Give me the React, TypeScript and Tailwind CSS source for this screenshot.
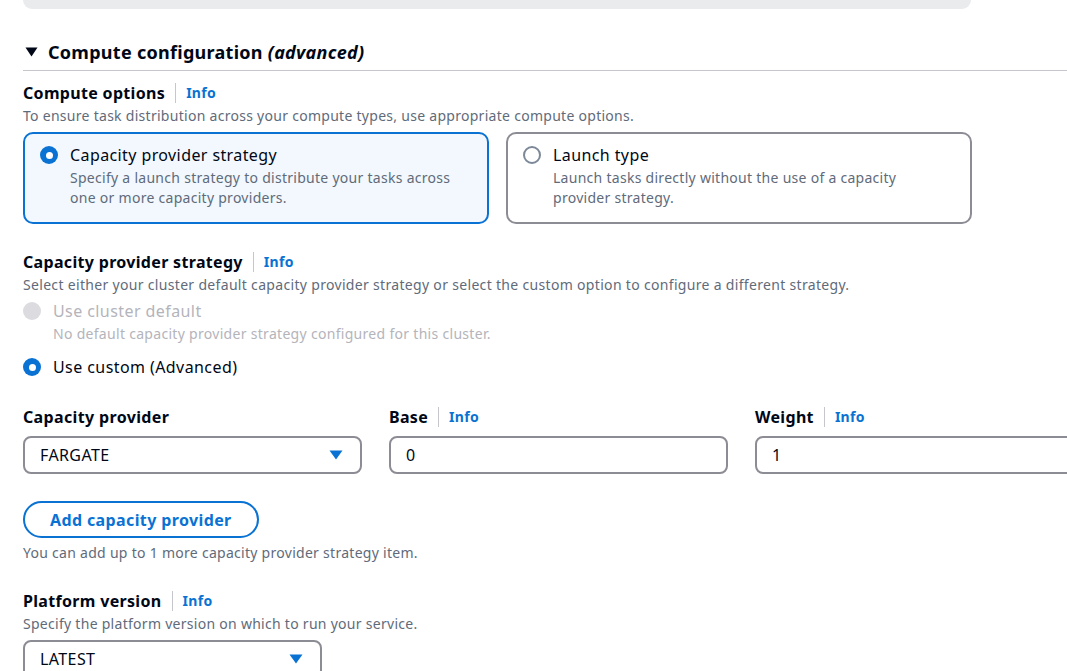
import React from "react";

function InfoLabel({ label, className = "" }: { label: string; className?: string }) {
  return (
    <div className={`flex items-center h-[22px] ${className}`}>
      <span className="text-[16px] font-bold leading-[22px] tracking-[0.32px] text-[#000716]">{label}</span>
      <span className="mx-[10px] h-[20px] w-px bg-[#c6c6cd]" />
      <a className="text-[14px] font-bold leading-[20px] tracking-[0.3px] text-[#0972d3]">Info</a>
    </div>
  );
}

function Radio({ checked, disabled }: { checked?: boolean; disabled?: boolean }) {
  if (disabled) {
    return <span className="block h-[18px] w-[18px] shrink-0 rounded-full bg-[#dcdce0]" />;
  }
  if (checked) {
    return (
      <span className="flex h-[18px] w-[18px] shrink-0 items-center justify-center rounded-full bg-[#0972d3]">
        <span className="block h-[7px] w-[7px] rounded-full bg-white" />
      </span>
    );
  }
  return <span className="block h-[18px] w-[18px] shrink-0 rounded-full border-2 border-[#7d8998] bg-white" />;
}

function Caret() {
  return (
    <svg width="14" height="10" viewBox="0 0 14 10" className="shrink-0">
      <path d="M0.5 0.5 H13.5 L7 9.5 Z" fill="#0972d3" />
    </svg>
  );
}

function Tile({ title, desc, checked }: { title: string; desc: React.ReactNode; checked?: boolean }) {
  return (
    <div
      className={`flex w-[466px] gap-[12px] rounded-[10px] border-2 pl-[15px] pr-4 pt-[10px] pb-[14px] ${
        checked ? "border-[#0972d3] bg-[#f2f8fd]" : "border-[#8c8c94] bg-white"
      }`}
    >
      <div className="pt-[2px]">
        <Radio checked={checked} />
      </div>
      <div>
        <div className="text-[16px] leading-[22px] tracking-[0.4px] text-[#000716]">{title}</div>
        <div className="mt-[2px] text-[14px] leading-[20px] tracking-[0.28px] text-[#5f6b7a]">{desc}</div>
      </div>
    </div>
  );
}

export default function App() {
  return (
    <div
      className="h-[671px] w-[1067px] overflow-hidden bg-white text-[#000716] tracking-[0.28px]"
      style={{ fontFamily: '"Noto Sans", "Open Sans", Arial, sans-serif' }}
    >
      <div className="ml-[23px] h-[9px] w-[948px] rounded-b-[12px] bg-[#e9ebed]" />

      <div className="ml-[23px] mt-[31px] border-b border-[#c6c6cd] pb-[6px]">
        <div className="flex items-center gap-[10px] pl-[2px]">
          <svg width="13" height="10" viewBox="0 0 13 10">
            <path d="M0.5 0.5 H12.5 L6.5 9.5 Z" fill="#000716" />
          </svg>
          <h2 className="text-[18px] font-bold leading-[24px] tracking-[0.28px]">
            Compute configuration <i className="font-bold">(advanced)</i>
          </h2>
        </div>
      </div>

      <div className="pl-[23px]">
        <InfoLabel label="Compute options" className="mt-[11px]" />
        <p className="mt-[2px] text-[14px] leading-[20px] text-[#5f6b7a]">
          To ensure task distribution across your compute types, use appropriate compute options.
        </p>
        <div className="mt-[6px] flex gap-[17px]">
          <Tile
            checked
            title="Capacity provider strategy"
            desc={
              <>
                Specify a launch strategy to distribute your tasks across
                <br />
                one or more capacity providers.
              </>
            }
          />
          <Tile
            title="Launch type"
            desc={
              <>
                Launch tasks directly without the use of a capacity
                <br />
                provider strategy.
              </>
            }
          />
        </div>

        <InfoLabel label="Capacity provider strategy" className="mt-[27px]" />
        <p className="mt-[2px] text-[14px] leading-[20px] tracking-[0.32px] text-[#5f6b7a]">
          Select either your cluster default capacity provider strategy or select the custom option to configure a different strategy.
        </p>

        <div className="mt-[5px] flex gap-[12px]">
          <div className="pt-[2px]">
            <Radio disabled />
          </div>
          <div>
            <div className="text-[16px] leading-[22px] tracking-[0.42px] text-[#b4b4bb]">Use cluster default</div>
            <div className="mt-[2px] text-[14px] leading-[20px] tracking-[0.3px] text-[#b4b4bb]">
              No default capacity provider strategy configured for this cluster.
            </div>
          </div>
        </div>
        <div className="mt-[12px] flex items-center gap-[12px]">
          <Radio checked />
          <div className="text-[16px] leading-[22px] tracking-[0.42px]">Use custom (Advanced)</div>
        </div>

        <div className="mt-[28px] flex w-[1071px] gap-[27px]">
          <div className="w-[339px]">
            <div className="h-[22px] text-[16px] font-bold leading-[22px] tracking-[0.35px]">Capacity provider</div>
            <div className="mt-[8px] flex h-[38px] items-center justify-between rounded-[8px] border-2 border-[#8c8c94] pl-[15px] pr-[17px] text-[16px] tracking-[0.4px]">
              <span>FARGATE</span>
              <Caret />
            </div>
          </div>
          <div className="w-[339px]">
            <InfoLabel label="Base" />
            <div className="mt-[8px] flex h-[38px] items-center rounded-[8px] border-2 border-[#8c8c94] pl-[15px] text-[16px]">
              0
            </div>
          </div>
          <div className="w-[339px]">
            <InfoLabel label="Weight" />
            <div className="mt-[8px] flex h-[38px] items-center rounded-[8px] border-2 border-[#8c8c94] pl-[15px] text-[16px]">
              1
            </div>
          </div>
        </div>

        <button className="mt-[27px] flex h-[37px] items-center rounded-full border-2 border-[#0972d3] px-[25px] text-[16px] font-bold tracking-[0.38px] text-[#0972d3]">
          Add capacity provider
        </button>
        <p className="mt-[5px] text-[14px] leading-[20px] text-[#5f6b7a]">
          You can add up to 1 more capacity provider strategy item.
        </p>

        <InfoLabel label="Platform version" className="mt-[27px]" />
        <p className="mt-[2px] text-[14px] leading-[20px] text-[#5f6b7a]">
          Specify the platform version on which to run your service.
        </p>
        <div className="mt-[6px] flex h-[38px] w-[299px] items-center justify-between rounded-[8px] border-2 border-[#8c8c94] pl-[15px] pr-[17px] text-[16px] tracking-[0.4px]">
          <span>LATEST</span>
          <Caret />
        </div>
      </div>
    </div>
  );
}
